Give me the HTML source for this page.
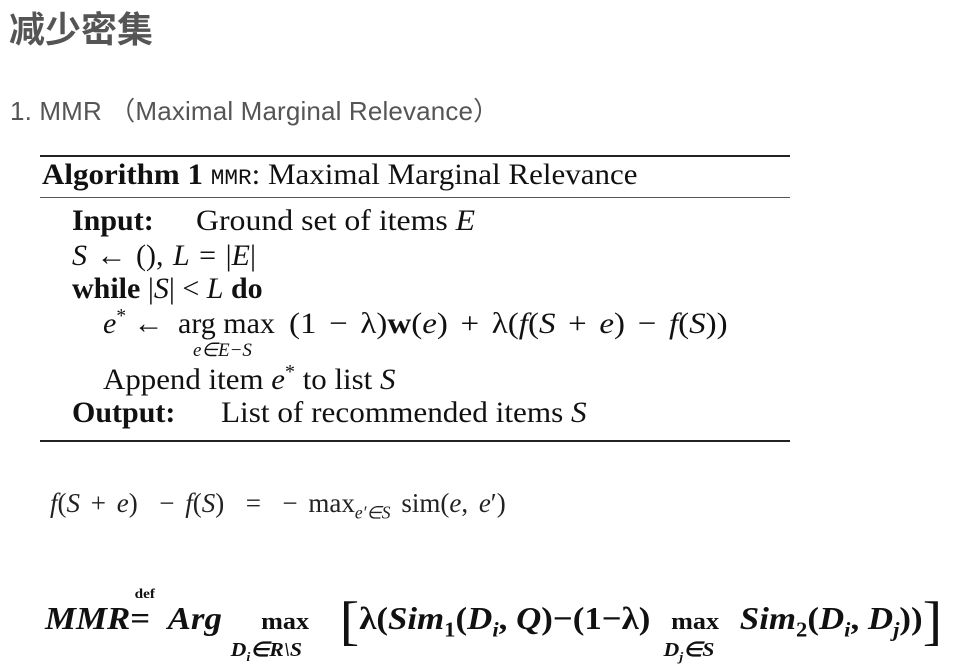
<!DOCTYPE html>
<html><head><meta charset="utf-8"><style>
body{margin:0;width:958px;height:668px;background:#fff;position:relative;overflow:hidden}
.a{position:absolute;white-space:nowrap;line-height:1;transform-origin:0 50%}
.s{font-family:"Liberation Serif",serif;color:#111}
.i{font-style:italic}
.b{font-weight:bold}
.r{position:absolute;left:40px;width:750px;background:#222}
sub,sup{font-size:65%;line-height:0}
</style></head><body>
<div class="a" style="left:9px;top:1px;font:bold 36px 'Liberation Sans','Noto Sans CJK SC',sans-serif;color:#555">减少密集</div>
<div class="a" style="left:10px;top:91px;font:26px 'Liberation Sans','Noto Sans CJK SC',sans-serif;color:#555;letter-spacing:0.15px">1. MMR （Maximal Marginal Relevance）</div>

<div class="r" style="top:155px;height:2px"></div>
<div class="a s" style="left:42px;top:160px;font-size:30px;transform:scaleX(1.033)"><span class="b">Algorithm 1</span> <span style="font-family:'Liberation Mono',monospace;font-size:22px">MMR</span>: Maximal Marginal Relevance</div>
<div class="r" style="top:197px;height:1px;background:#555"></div>

<div class="a s" style="left:72px;top:206px;font-size:30px"><span class="b">Input:</span><span style="display:inline-block;width:42px"></span><span style="display:inline-block;transform:scaleX(1.06);transform-origin:0 0">Ground set of items <span class="i">E</span></span></div>
<div class="a s" style="left:72px;top:241px;font-size:30px;word-spacing:2px"><span class="i">S</span> ← (), <span class="i">L</span> = |<span class="i">E</span>|</div>
<div class="a s" style="left:72px;top:274px;font-size:30px"><span class="b">while</span> |<span class="i">S</span>| &lt; <span class="i">L</span> <span class="b">do</span></div>
<div class="a s" style="left:103px;top:309px;font-size:30px"><span class="i">e</span><sup>*</sup> ←</div>
<div class="a s" style="left:178px;top:309px;font-size:30px">arg max</div>
<div class="a s" style="left:289px;top:309px;font-size:30px;transform:scaleX(1.1);word-spacing:4px">(1 − λ)<span class="b">w</span>(<span class="i">e</span>) + λ(<span class="i">f</span>(<span class="i">S</span> + <span class="i">e</span>) − <span class="i">f</span>(<span class="i">S</span>))</div>
<div class="a s i" style="left:193px;top:341px;font-size:19px">e∈E−S</div>
<div class="a s" style="left:103px;top:365px;font-size:30px;transform:scaleX(1.03)">Append item <span class="i">e</span><sup>*</sup> to list <span class="i">S</span></div>
<div class="a s" style="left:72px;top:398px;font-size:30px"><span class="b">Output:</span></div>
<div class="a s" style="left:221px;top:398px;font-size:30px;transform:scaleX(1.04)">List of recommended items <span class="i">S</span></div>
<div class="r" style="top:440px;height:2px"></div>

<div class="a s" style="left:50px;top:490px;font-size:27px;color:#222;word-spacing:4px"><span class="i">f</span>(<span class="i">S</span> + <span class="i">e</span>) &nbsp;− <span class="i">f</span>(<span class="i">S</span>) &nbsp;= &nbsp;− max<sub class="i">e′∈S</sub> sim(<span class="i">e</span>, <span class="i">e</span>′)</div>

<div class="a s b" style="left:45px;top:594px;font-size:32px;color:#111;transform:scaleX(1.09)"><span class="i">MMR</span><span style="position:relative"><span style="position:absolute;left:4px;top:-12px;font-size:14px">def</span>=</span> &nbsp;<span class="i">Arg</span> <span style="display:inline-block;position:relative;width:100px;text-align:center;font-size:24px">max<span class="i" style="position:absolute;left:0;top:30px;font-size:20px">D<sub>i</sub>∈R\S</span></span><span style="font-size:54px;font-weight:normal;vertical-align:-10px">[</span>λ(<span class="i">Sim</span><sub>1</sub>(<span class="i">D<sub>i</sub></span>, <span class="i">Q</span>)−(1−λ) <span style="display:inline-block;position:relative;width:66px;text-align:center;font-size:24px">max<span class="i" style="position:absolute;left:4px;top:30px;font-size:20px">D<sub>j</sub>∈S</span></span> <span class="i">Sim</span><sub>2</sub>(<span class="i">D<sub>i</sub></span>, <span class="i">D<sub>j</sub></span>))<span style="font-size:54px;font-weight:normal;vertical-align:-10px">]</span></div>
</body></html>
